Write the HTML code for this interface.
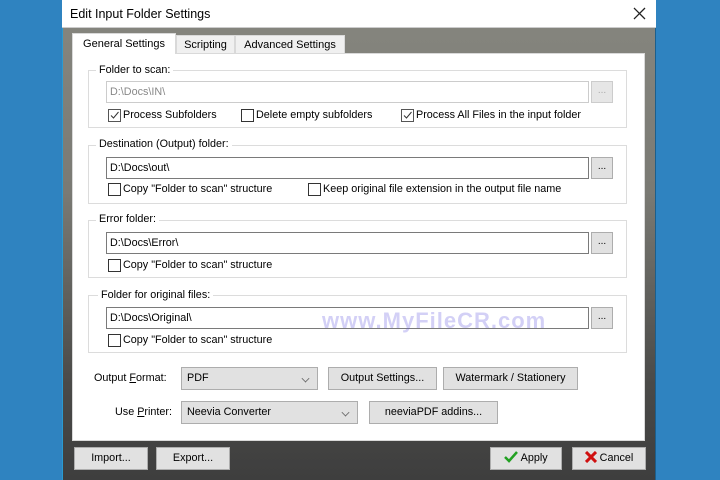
<!DOCTYPE html>
<html><head><meta charset="utf-8"><style>
*{box-sizing:border-box;margin:0;padding:0}
body{width:720px;height:480px;background:#2f83c0;position:relative;overflow:hidden;font-family:"Liberation Sans",sans-serif;font-size:10.8px;color:#000}
.a{position:absolute}
#dlg{left:62px;top:0;width:594px;height:480px;background:linear-gradient(#86867f,#7a7a74 40%,#4a4a48 80%,#3e3e3e);border-left:1px solid #2a9ad0;border-right:1px solid #1c5f8c}
#title{left:62px;top:0;width:594px;height:28px;background:#fff;border-bottom:1px solid #ccc}
.tab{background:#f0f0f0;border:1px solid #d9d9d9;height:19px;top:35px;text-align:center;line-height:18px;font-size:11px}
#panel{left:72px;top:53px;width:573px;height:388px;background:#fff;border:1px solid #d9d9d9}
.grp{border:1px solid #dcdcdc;left:88px;width:539px}
.lbl{background:#fff;padding:0 3px;font-size:10.8px;line-height:13px}
.inp{left:106px;width:483px;height:22px;border:1px solid #7a7a7a;background:#fff;line-height:20px;padding-left:3px;font-size:10.8px}
.br{left:591px;width:22px;height:22px;border:1px solid #adadad;background:#e1e1e1;text-align:center;line-height:18px;font-size:10px}
.cb{width:13px;height:13px;border:1px solid #333;background:#fff}
.cbl{font-size:10.8px;line-height:13px}
.btn{border:1px solid #adadad;background:#e1e1e1;text-align:center;font-size:10.8px;line-height:21px;height:23px}
.sel{border:1px solid #adadad;background:#e1e1e1;height:23px;line-height:21px;padding-left:5px;font-size:10.8px}
.chev{position:absolute;right:8px;top:7px;width:7px;height:7px;border-right:1px solid #666;border-bottom:1px solid #666;transform:rotate(45deg) scale(.8)}
</style></head><body>
<div id="dlg" class="a"></div>
<div id="title" class="a"><span class="a" style="left:8px;top:7px;font-size:12.5px">Edit Input Folder Settings</span>
<svg class="a" style="left:571px;top:7px" width="13" height="13"><path d="M1 1L12 12M12 1L1 12" stroke="#222" stroke-width="1.3"/></svg></div>
<div id="panel" class="a"></div>
<div class="a tab" style="left:72px;top:33px;height:21px;width:104px;background:#fff;border-bottom:none;line-height:21px">General Settings</div>
<div class="a tab" style="left:176px;width:59px">Scripting</div>
<div class="a tab" style="left:235px;width:110px">Advanced Settings</div>

<div class="a grp" style="top:70px;height:58px"></div>
<div class="a lbl" style="left:96px;top:64px">Folder to scan:</div>
<div class="a inp" style="top:81px;border-color:#ccc;color:#888">D:\Docs\IN\</div>
<div class="a br" style="top:81px;color:#aaa;border-color:#ccc;background:#e6e6e6">...</div>
<div class="a cb" style="left:108px;top:109px;border-color:#555"><svg width="11" height="11" style="display:block"><path d="M2 5.5L4.5 8L9.5 2" stroke="#333" fill="none"/></svg></div>
<div class="a cbl" style="left:123px;top:109px">Process Subfolders</div>
<div class="a cb" style="left:241px;top:109px"></div>
<div class="a cbl" style="left:256px;top:109px">Delete empty subfolders</div>
<div class="a cb" style="left:401px;top:109px;border-color:#555"><svg width="11" height="11" style="display:block"><path d="M2 5.5L4.5 8L9.5 2" stroke="#333" fill="none"/></svg></div>
<div class="a cbl" style="left:416px;top:109px">Process All Files in the input folder</div>

<div class="a grp" style="top:145px;height:59px"></div>
<div class="a lbl" style="left:96px;top:138px">Destination (Output) folder:</div>
<div class="a inp" style="top:157px">D:\Docs\out\</div>
<div class="a br" style="top:157px">...</div>
<div class="a cb" style="left:108px;top:183px"></div>
<div class="a cbl" style="left:123px;top:183px">Copy "Folder to scan" structure</div>
<div class="a cb" style="left:308px;top:183px"></div>
<div class="a cbl" style="left:323px;top:183px">Keep original file extension in the output file name</div>

<div class="a grp" style="top:220px;height:58px"></div>
<div class="a lbl" style="left:96px;top:213px">Error folder:</div>
<div class="a inp" style="top:232px">D:\Docs\Error\</div>
<div class="a br" style="top:232px">...</div>
<div class="a cb" style="left:108px;top:259px"></div>
<div class="a cbl" style="left:123px;top:259px">Copy "Folder to scan" structure</div>

<div class="a grp" style="top:295px;height:58px"></div>
<div class="a lbl" style="left:98px;top:289px">Folder for original files:</div>
<div class="a inp" style="top:307px">D:\Docs\Original\</div>
<div class="a br" style="top:307px">...</div>
<div class="a cb" style="left:108px;top:334px"></div>
<div class="a cbl" style="left:123px;top:334px">Copy "Folder to scan" structure</div>
<div class="a" style="left:322px;top:308px;font-size:22px;font-weight:bold;color:rgba(110,100,225,.3);letter-spacing:1px">www.MyFileCR.com</div>

<div class="a cbl" style="left:94px;top:372px">Output <u>F</u>ormat:</div>
<div class="a sel" style="left:181px;top:367px;width:137px">PDF<span class="chev"></span></div>
<div class="a btn" style="left:328px;top:367px;width:109px">Output Settings...</div>
<div class="a btn" style="left:443px;top:367px;width:135px">Watermark / Stationery</div>
<div class="a cbl" style="left:115px;top:406px">Use <u>P</u>rinter:</div>
<div class="a sel" style="left:181px;top:401px;width:177px">Neevia Converter<span class="chev"></span></div>
<div class="a btn" style="left:369px;top:401px;width:129px">neeviaPDF addins...</div>

<div class="a btn" style="left:74px;top:447px;width:74px">Import...</div>
<div class="a btn" style="left:156px;top:447px;width:74px">Export...</div>
<div class="a btn" style="left:490px;top:447px;width:72px"><svg width="14" height="12" style="vertical-align:-2px"><path d="M1 6L5 10L13 1" stroke="#22a022" stroke-width="2.5" fill="none"/></svg> Apply</div>
<div class="a btn" style="left:572px;top:447px;width:74px"><svg width="12" height="12" style="vertical-align:-2px"><path d="M1 1L11 11M11 1L1 11" stroke="#d01010" stroke-width="3"/></svg> Cancel</div>
</body></html>
